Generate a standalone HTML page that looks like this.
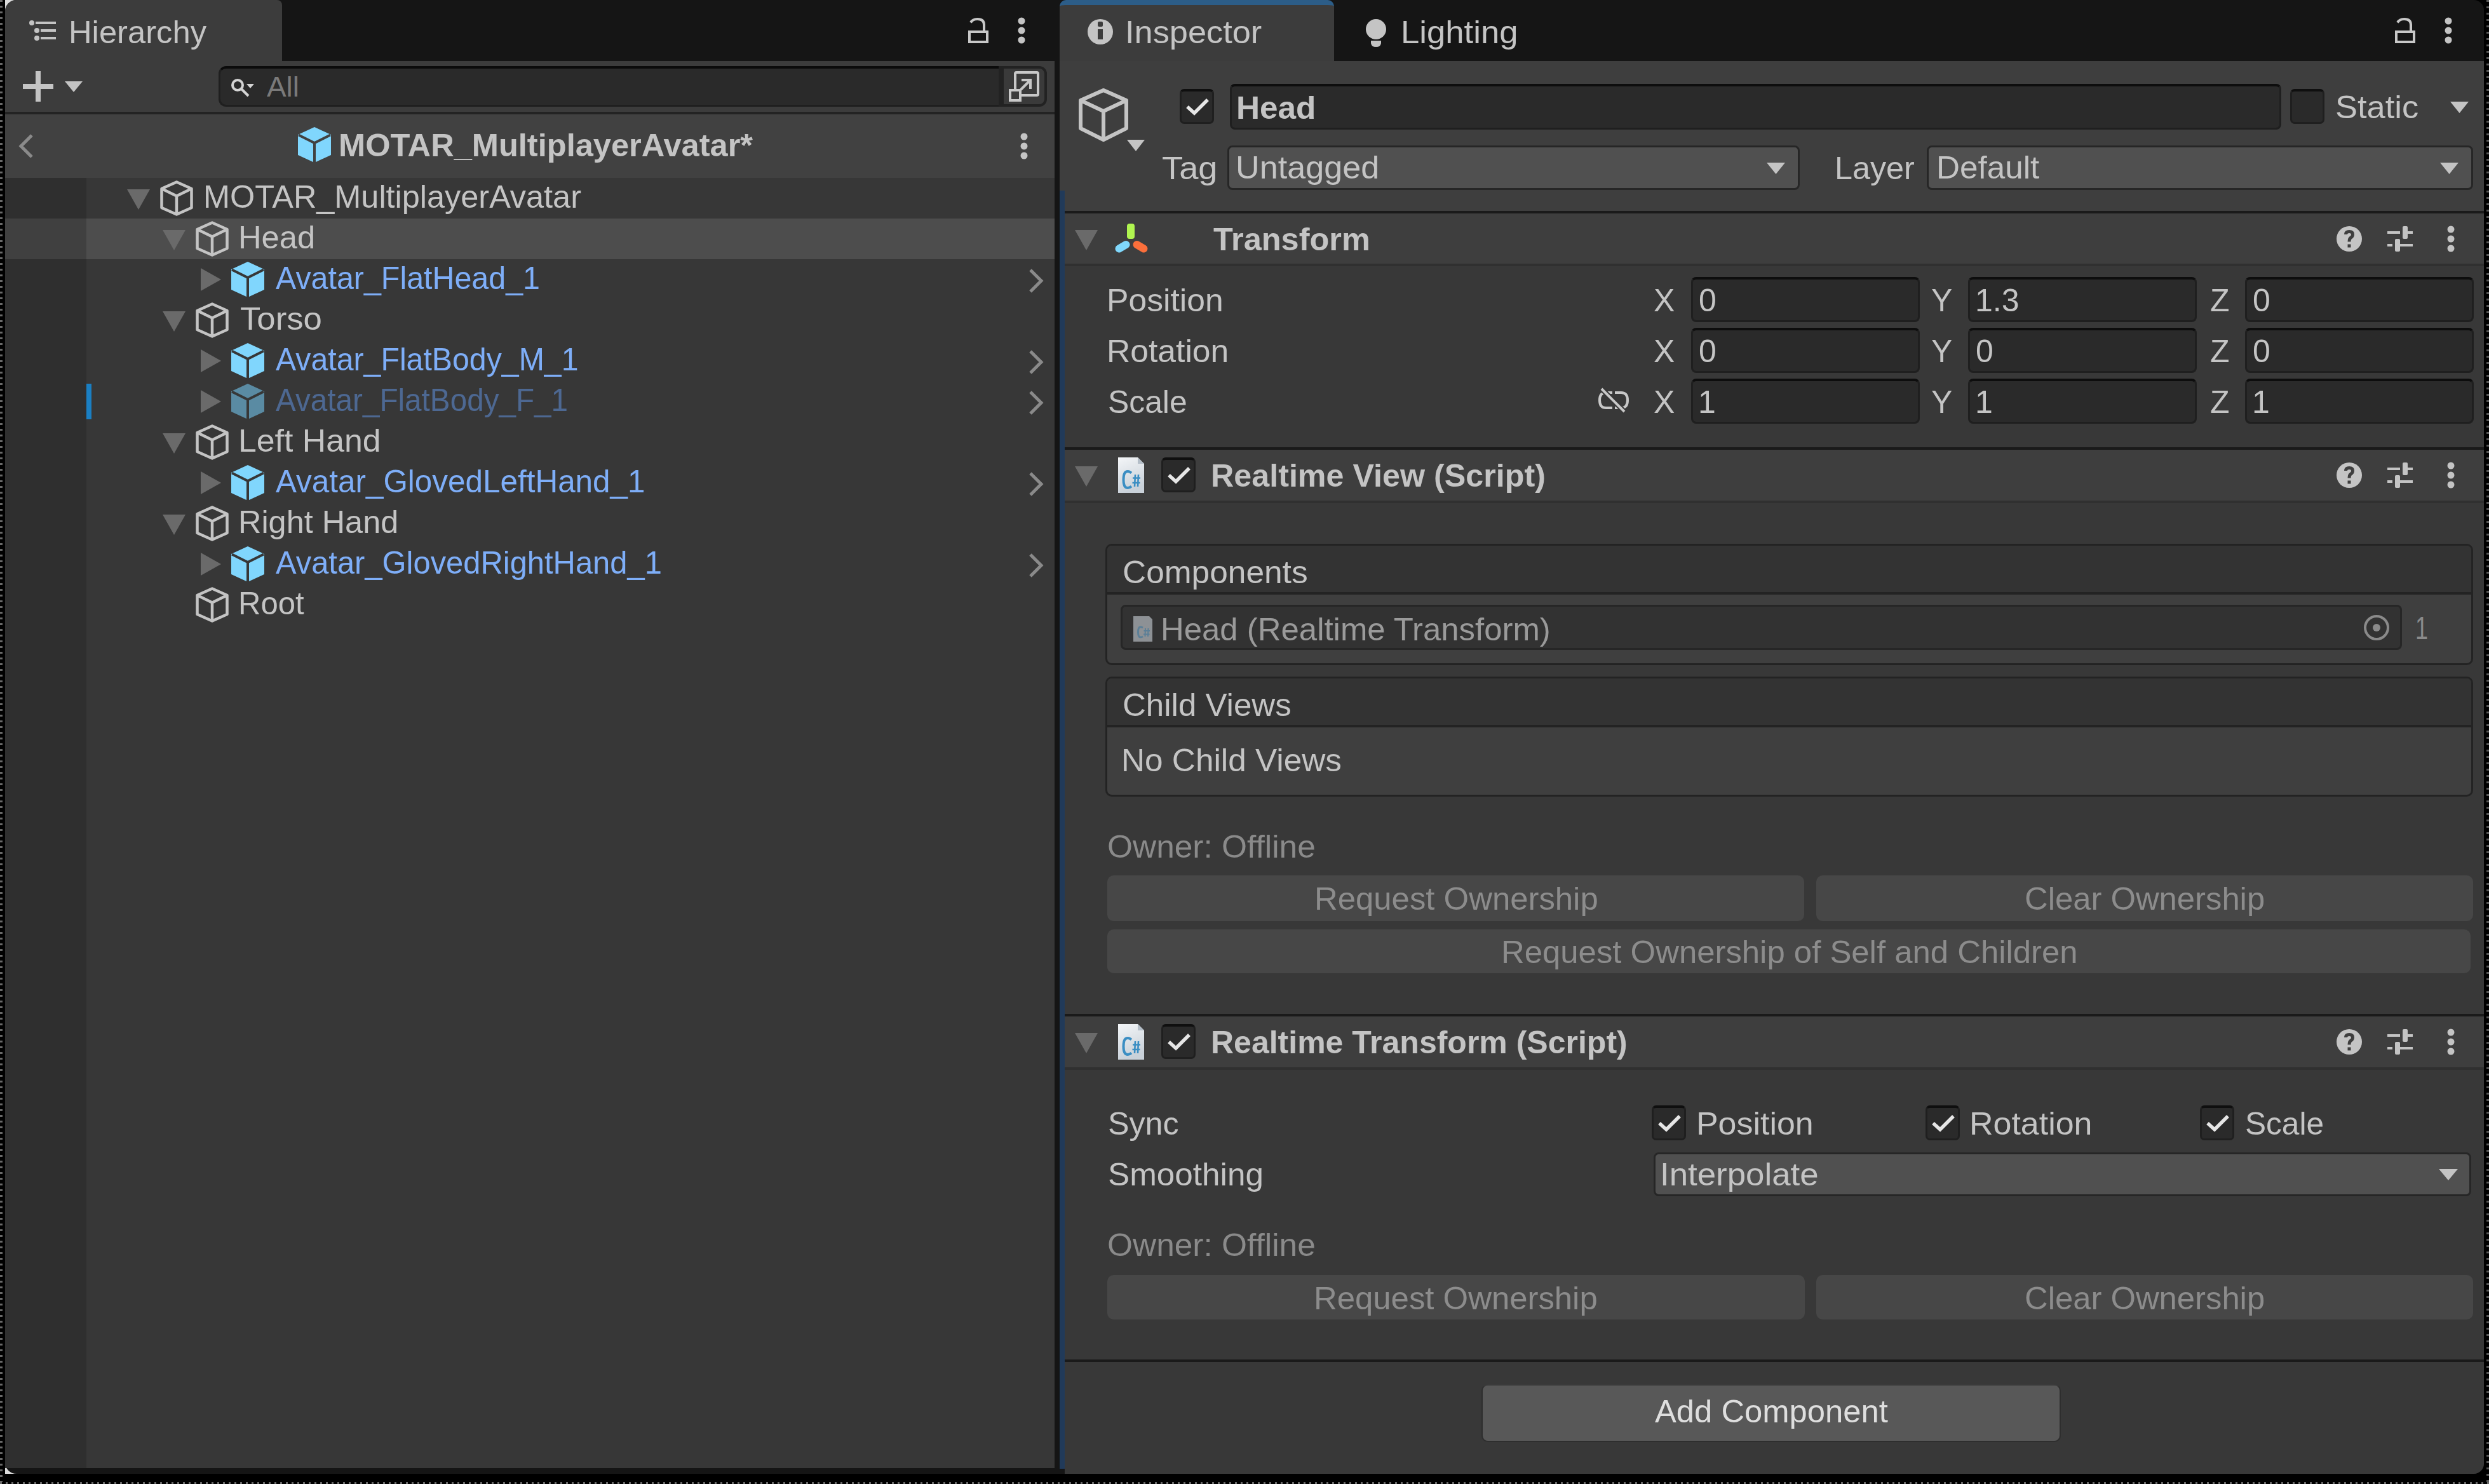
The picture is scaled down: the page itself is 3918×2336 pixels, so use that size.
<!DOCTYPE html>
<html><head><meta charset="utf-8"><title>Unity Editor</title>
<style>
*{margin:0;padding:0;box-sizing:border-box}
html,body{width:3918px;height:2336px;overflow:hidden;background:#000}
body{position:relative;font-family:"Liberation Sans",sans-serif;font-size:50px;color:#c4c4c4}
div,span,svg{position:absolute;display:block}
.t{line-height:50px;white-space:pre;transform-origin:0 0}
.fld{background:#2a2a2a;border:3px solid #1f1f1f;border-top:4px solid #0d0d0d;border-radius:8px}
.dd{background:#505050;border:3px solid #262626;border-radius:8px}
.cb{width:54px;height:55px;background:#2a2a2a;border:3px solid #1f1f1f;border-top:4px solid #0f0f0f;border-radius:7px}
.btnd{background:#474747;border-radius:10px}
.sep{background:#1a1a1a;height:4px}
.hdr{background:#3e3e3e}
.hl{background:#303030;height:4px}
.body{background:#383838}
</style></head><body>
<div style="left:8px;top:0;width:24px;height:24px;background:#dcdcdc"></div>
<div style="left:8px;top:2296px;width:24px;height:24px;background:#dcdcdc"></div>
<div style="left:8px;top:0;width:1652px;height:2320px;background:#151515;border-radius:18px 0 0 18px"></div>
<div style="left:8px;top:0;width:436px;height:96px;background:#3c3c3c;border-radius:18px 8px 0 0"></div>
<div style="left:8px;top:96px;width:1652px;height:80px;background:#3c3c3c"></div>
<div style="left:8px;top:176px;width:1652px;height:4px;background:#232323"></div>
<div style="left:8px;top:180px;width:1652px;height:100px;background:#414141"></div>
<div style="left:8px;top:280px;width:1652px;height:2031px;background:#373737"></div>
<div style="left:8px;top:280px;width:128px;height:2031px;background:#2f2f2f"></div>
<div style="left:8px;top:344px;width:128px;height:64px;background:#404040"></div>
<div style="left:136px;top:344px;width:1524px;height:64px;background:#4d4d4d"></div>
<div style="left:136px;top:604px;width:8px;height:56px;background:#1a7fc3"></div>
<svg style="left:46px;top:32px" width="42" height="32" viewBox="0 0 42 32" fill="#c4c4c4"><circle cx="4" cy="4" r="4"/><rect x="10" y="2" width="32" height="4"/><circle cx="12" cy="16" r="4"/><rect x="18" y="14" width="24" height="4"/><circle cx="12" cy="28" r="4"/><rect x="18" y="26" width="24" height="4"/></svg>
<span class="t" style="left:107.9px;top:26px;transform:scaleX(1.0143);">Hierarchy</span>
<svg style="left:1522px;top:26px" width="36" height="44" viewBox="0 0 36 44" fill="none" stroke="#c8c8c8" stroke-width="4"><rect x="4" y="24" width="28" height="16"/><path d="M6 9.5Q9 4 16.5 4Q27 4 27 13V22"/></svg>
<svg style="left:1601px;top:27px" width="14" height="42" viewBox="0 0 14 42" fill="#c4c4c4"><circle cx="7" cy="6" r="5.5"/><circle cx="7" cy="21" r="5.5"/><circle cx="7" cy="36" r="5.5"/></svg>
<svg style="left:36px;top:112px" width="48" height="48" viewBox="0 0 48 48" fill="#c4c4c4"><rect x="20" y="0" width="8" height="48"/><rect x="0" y="20" width="48" height="8"/></svg>
<svg style="left:102px;top:128px" width="28" height="18" viewBox="0 0 28 18" fill="#c4c4c4"><path d="M0 0H28L14 17Z"/></svg>
<div style="left:344px;top:104px;width:1236px;height:64px;background:#2a2a2a;border:3px solid #1f1f1f;border-top:4px solid #0b0b0b;border-right:0;border-radius:12px 0 0 12px"></div>
<svg style="left:360px;top:120px" width="44" height="36" viewBox="0 0 44 36" fill="none" stroke="#d4d4d4" stroke-width="4"><circle cx="14" cy="14" r="8"/><path d="M20 20L31 31"/><path d="M28 12H40L34 19Z" fill="#d4d4d4" stroke="none"/></svg>
<span class="t" style="left:420.0px;top:115px;font-size:44px;line-height:44px;color:#7a7a7a;transform:scaleX(1.0435);">All</span>
<div style="left:1572px;top:104px;width:76px;height:64px;background:#3a3a3a;border:4px solid #222;border-left:8px solid #222;border-radius:0 12px 12px 0"></div>
<svg style="left:1586px;top:110px" width="52" height="52" viewBox="0 0 52 52" fill="none" stroke="#c8c8c8" stroke-width="4"><path d="M12 30V6Q12 4 14 4H46Q48 4 48 6V38Q48 40 46 40H22"/><rect x="4" y="32" width="16" height="16"/><path d="M21 31L35 17"/><path d="M22 14H38V30H34V18H22Z" fill="#c8c8c8" stroke="none"/></svg>
<svg style="left:27px;top:210px" width="28" height="40" viewBox="0 0 28 40" fill="none" stroke="#8a8a8a" stroke-width="5"><path d="M23 3L6 20L23 37"/></svg>
<svg style="left:469px;top:200px" width="52" height="56" viewBox="0 0 52 56"><path d="M26 0L52 12V44L26 56L0 44V12Z" fill="#80d6fd"/><path d="M1 12.5L26 25L51 12.5M26 25V56" stroke="#414141" stroke-width="4" fill="none"/></svg>
<span class="t" style="left:532.6px;top:204px;font-weight:bold;transform:scaleX(1.0115);">MOTAR_MultiplayerAvatar*</span>
<svg style="left:1605px;top:209px" width="14" height="42" viewBox="0 0 14 42" fill="#c4c4c4"><circle cx="7" cy="6" r="5.5"/><circle cx="7" cy="21" r="5.5"/><circle cx="7" cy="36" r="5.5"/></svg>
<svg style="left:200px;top:298px" width="36" height="32" viewBox="0 0 36 32"><path d="M0 0H36L18 32Z" fill="#6a6a6a"/></svg>
<svg style="left:252px;top:284px" width="52" height="56" viewBox="0 0 52 56"><path d="M26 2.5L49.5 13V43L26 53.5L2.5 43V13Z M2.5 13L26 24.5L49.5 13M26 24.5V53.5" fill="none" stroke="#c4c4c4" stroke-width="4.5" stroke-linejoin="round"/></svg>
<span class="t" style="left:319.5px;top:285px;transform:scaleX(1.0084);">MOTAR_MultiplayerAvatar</span>
<svg style="left:256px;top:362px" width="36" height="32" viewBox="0 0 36 32"><path d="M0 0H36L18 32Z" fill="#6a6a6a"/></svg>
<svg style="left:308px;top:348px" width="52" height="56" viewBox="0 0 52 56"><path d="M26 2.5L49.5 13V43L26 53.5L2.5 43V13Z M2.5 13L26 24.5L49.5 13M26 24.5V53.5" fill="none" stroke="#c4c4c4" stroke-width="4.5" stroke-linejoin="round"/></svg>
<span class="t" style="left:374.9px;top:349px;transform:scaleX(1.0133);">Head</span>
<svg style="left:316px;top:422px" width="32" height="36" viewBox="0 0 32 36"><path d="M0 0V36L32 18Z" fill="#6a6a6a"/></svg>
<svg style="left:364px;top:412px" width="52" height="56" viewBox="0 0 52 56"><path d="M26 0L52 12V44L26 56L0 44V12Z" fill="#80d6fd"/><path d="M1 12.5L26 25L51 12.5M26 25V56" stroke="#373737" stroke-width="4" fill="none"/></svg>
<span class="t" style="left:433.5px;top:413px;color:#7eaef8;transform:scaleX(0.9675);">Avatar_FlatHead_1</span>
<svg style="left:1618px;top:422px" width="26" height="40" viewBox="0 0 26 40" fill="none" stroke="#8a8a8a" stroke-width="5"><path d="M4 3L21 20L4 37"/></svg>
<svg style="left:256px;top:490px" width="36" height="32" viewBox="0 0 36 32"><path d="M0 0H36L18 32Z" fill="#6a6a6a"/></svg>
<svg style="left:308px;top:476px" width="52" height="56" viewBox="0 0 52 56"><path d="M26 2.5L49.5 13V43L26 53.5L2.5 43V13Z M2.5 13L26 24.5L49.5 13M26 24.5V53.5" fill="none" stroke="#c4c4c4" stroke-width="4.5" stroke-linejoin="round"/></svg>
<span class="t" style="left:377.9px;top:477px;transform:scaleX(1.0546);">Torso</span>
<svg style="left:316px;top:550px" width="32" height="36" viewBox="0 0 32 36"><path d="M0 0V36L32 18Z" fill="#6a6a6a"/></svg>
<svg style="left:364px;top:540px" width="52" height="56" viewBox="0 0 52 56"><path d="M26 0L52 12V44L26 56L0 44V12Z" fill="#80d6fd"/><path d="M1 12.5L26 25L51 12.5M26 25V56" stroke="#373737" stroke-width="4" fill="none"/></svg>
<span class="t" style="left:433.5px;top:541px;color:#7eaef8;transform:scaleX(0.9650);">Avatar_FlatBody_M_1</span>
<svg style="left:1618px;top:550px" width="26" height="40" viewBox="0 0 26 40" fill="none" stroke="#8a8a8a" stroke-width="5"><path d="M4 3L21 20L4 37"/></svg>
<svg style="left:316px;top:614px" width="32" height="36" viewBox="0 0 32 36"><path d="M0 0V36L32 18Z" fill="#6a6a6a"/></svg>
<svg style="left:364px;top:604px" width="52" height="56" viewBox="0 0 52 56"><path d="M26 0L52 12V44L26 56L0 44V12Z" fill="#5a8ba3"/><path d="M1 12.5L26 25L51 12.5M26 25V56" stroke="#373737" stroke-width="4" fill="none"/></svg>
<span class="t" style="left:433.5px;top:605px;color:#4d6892;transform:scaleX(0.9532);">Avatar_FlatBody_F_1</span>
<svg style="left:1618px;top:614px" width="26" height="40" viewBox="0 0 26 40" fill="none" stroke="#8a8a8a" stroke-width="5"><path d="M4 3L21 20L4 37"/></svg>
<svg style="left:256px;top:682px" width="36" height="32" viewBox="0 0 36 32"><path d="M0 0H36L18 32Z" fill="#6a6a6a"/></svg>
<svg style="left:308px;top:668px" width="52" height="56" viewBox="0 0 52 56"><path d="M26 2.5L49.5 13V43L26 53.5L2.5 43V13Z M2.5 13L26 24.5L49.5 13M26 24.5V53.5" fill="none" stroke="#c4c4c4" stroke-width="4.5" stroke-linejoin="round"/></svg>
<span class="t" style="left:374.9px;top:669px;transform:scaleX(1.0357);">Left Hand</span>
<svg style="left:316px;top:742px" width="32" height="36" viewBox="0 0 32 36"><path d="M0 0V36L32 18Z" fill="#6a6a6a"/></svg>
<svg style="left:364px;top:732px" width="52" height="56" viewBox="0 0 52 56"><path d="M26 0L52 12V44L26 56L0 44V12Z" fill="#80d6fd"/><path d="M1 12.5L26 25L51 12.5M26 25V56" stroke="#373737" stroke-width="4" fill="none"/></svg>
<span class="t" style="left:433.5px;top:733px;color:#7eaef8;transform:scaleX(0.9884);">Avatar_GlovedLeftHand_1</span>
<svg style="left:1618px;top:742px" width="26" height="40" viewBox="0 0 26 40" fill="none" stroke="#8a8a8a" stroke-width="5"><path d="M4 3L21 20L4 37"/></svg>
<svg style="left:256px;top:810px" width="36" height="32" viewBox="0 0 36 32"><path d="M0 0H36L18 32Z" fill="#6a6a6a"/></svg>
<svg style="left:308px;top:796px" width="52" height="56" viewBox="0 0 52 56"><path d="M26 2.5L49.5 13V43L26 53.5L2.5 43V13Z M2.5 13L26 24.5L49.5 13M26 24.5V53.5" fill="none" stroke="#c4c4c4" stroke-width="4.5" stroke-linejoin="round"/></svg>
<span class="t" style="left:375.0px;top:797px;transform:scaleX(1.0082);">Right Hand</span>
<svg style="left:316px;top:870px" width="32" height="36" viewBox="0 0 32 36"><path d="M0 0V36L32 18Z" fill="#6a6a6a"/></svg>
<svg style="left:364px;top:860px" width="52" height="56" viewBox="0 0 52 56"><path d="M26 0L52 12V44L26 56L0 44V12Z" fill="#80d6fd"/><path d="M1 12.5L26 25L51 12.5M26 25V56" stroke="#373737" stroke-width="4" fill="none"/></svg>
<span class="t" style="left:433.5px;top:861px;color:#7eaef8;transform:scaleX(0.9777);">Avatar_GlovedRightHand_1</span>
<svg style="left:1618px;top:870px" width="26" height="40" viewBox="0 0 26 40" fill="none" stroke="#8a8a8a" stroke-width="5"><path d="M4 3L21 20L4 37"/></svg>
<svg style="left:308px;top:924px" width="52" height="56" viewBox="0 0 52 56"><path d="M26 2.5L49.5 13V43L26 53.5L2.5 43V13Z M2.5 13L26 24.5L49.5 13M26 24.5V53.5" fill="none" stroke="#c4c4c4" stroke-width="4.5" stroke-linejoin="round"/></svg>
<span class="t" style="left:375.1px;top:925px;transform:scaleX(0.9804);">Root</span>
<div style="left:1660px;top:0;width:8px;height:2320px;background:#151515"></div>
<div style="left:1668px;top:0;width:2242px;height:2320px;background:#151515;border-radius:0 16px 16px 0"></div>
<div style="left:1668px;top:0;width:432px;height:96px;background:#3c3c3c;border-radius:10px 10px 0 0;border-top:8px solid #2c5d88"></div>
<svg style="left:1712px;top:30px" width="40" height="40" viewBox="0 0 40 40"><circle cx="20" cy="20" r="20" fill="#c4c4c4"/><rect x="16" y="16" width="8" height="16" fill="#3c3c3c"/><rect x="16" y="4" width="8" height="8" rx="2" fill="#3c3c3c"/></svg>
<span class="t" style="left:1770.5px;top:26px;transform:scaleX(1.0463);">Inspector</span>
<svg style="left:2150px;top:30px" width="32" height="44" viewBox="0 0 32 44" fill="#c4c4c4"><circle cx="16" cy="16" r="16"/><path d="M8 34H24V38Q23 44 16 44Q9 44 8 38Z"/></svg>
<span class="t" style="left:2204.8px;top:26px;transform:scaleX(1.0536);">Lighting</span>
<svg style="left:3768px;top:26px" width="36" height="44" viewBox="0 0 36 44" fill="none" stroke="#c8c8c8" stroke-width="4"><rect x="4" y="24" width="28" height="16"/><path d="M6 9.5Q9 4 16.5 4Q27 4 27 13V22"/></svg>
<svg style="left:3847px;top:27px" width="14" height="42" viewBox="0 0 14 42" fill="#c4c4c4"><circle cx="7" cy="6" r="5.5"/><circle cx="7" cy="21" r="5.5"/><circle cx="7" cy="36" r="5.5"/></svg>
<div class="hdr" style="left:1668px;top:96px;width:2242px;height:236px"></div>
<div style="left:1668px;top:300px;width:8px;height:2012px;background:#213a59"></div>
<svg style="left:1696px;top:138px" width="82" height="86" viewBox="0 0 82 86"><path d="M41 4L77 20V64L41 82L5 64V20Z M5 20L41 37L77 20M41 37V82" fill="none" stroke="#c4c4c4" stroke-width="6" stroke-linejoin="round"/></svg>
<svg style="left:1774px;top:220px" width="28" height="18" viewBox="0 0 28 18"><path d="M0 0H28L14 18Z" fill="#c4c4c4"/></svg>
<div class="cb" style="left:1857px;top:140px"></div><svg style="left:1867px;top:154px" width="36" height="28" viewBox="0 0 36 28" fill="none" stroke="#e6e6e6" stroke-width="5.5"><path d="M2 14L13 24L34 3"/></svg>
<div class="fld" style="left:1936px;top:132px;width:1655px;height:72px"></div>
<span class="t" style="left:1945.9px;top:145px;font-weight:bold;transform:scaleX(1.0259);">Head</span>
<div class="cb" style="left:3605px;top:140px"></div>
<span class="t" style="left:3675.9px;top:144px;transform:scaleX(1.0492);">Static</span>
<svg style="left:3857px;top:160px" width="29" height="18" viewBox="0 0 29 18"><path d="M0 0H29L14.5 18Z" fill="#c4c4c4"/></svg>
<span class="t" style="left:1828.9px;top:240px;transform:scaleX(1.0857);">Tag</span>
<div class="dd" style="left:1932px;top:229px;width:901px;height:70px"></div>
<span class="t" style="left:1944.8px;top:239px;transform:scaleX(1.0429);">Untagged</span>
<svg style="left:2781px;top:256px" width="29" height="18" viewBox="0 0 29 18"><path d="M0 0H29L14.5 18Z" fill="#c4c4c4"/></svg>
<span class="t" style="left:2888.0px;top:240px;transform:scaleX(1.0058);">Layer</span>
<div class="dd" style="left:3033px;top:229px;width:860px;height:70px"></div>
<span class="t" style="left:3047.9px;top:239px;transform:scaleX(1.0247);">Default</span>
<svg style="left:3841px;top:256px" width="29" height="18" viewBox="0 0 29 18"><path d="M0 0H29L14.5 18Z" fill="#c4c4c4"/></svg>
<div class="sep" style="left:1676px;top:332px;width:2234px"></div>
<div class="hdr" style="left:1676px;top:336px;width:2234px;height:79px"></div>
<div class="hl" style="left:1676px;top:415px;width:2234px"></div>
<svg style="left:1692px;top:362px" width="36" height="32" viewBox="0 0 36 32"><path d="M0 0H36L18 32Z" fill="#6a6a6a"/></svg>
<svg style="left:1752px;top:350px" width="58" height="50" viewBox="0 0 58 50"><rect x="22" y="2" width="12" height="24" rx="4" fill="#b0f550"/><path d="M9.5 41.5L20.5 35" stroke="#80d8fc" stroke-width="12" stroke-linecap="round"/><path d="M37.5 35L48.5 41.5" stroke="#fb6f3b" stroke-width="12" stroke-linecap="round"/></svg>
<span class="t" style="left:1909.7px;top:352px;font-weight:bold;transform:scaleX(1.0095);">Transform</span>
<svg style="left:3678px;top:356px" width="40" height="40" viewBox="0 0 40 40"><circle cx="20" cy="20" r="20" fill="#c4c4c4"/><path d="M14.5 13Q14.5 8.5 20 8.5Q25.5 8.5 25.5 13Q25.5 16.5 22.5 18Q20 19.5 20 24.5" fill="none" stroke="#3e3e3e" stroke-width="5"/><rect x="17.5" y="28.5" width="5" height="5" fill="#3e3e3e"/></svg>
<svg style="left:3758px;top:356px" width="40" height="40" viewBox="0 0 40 40" fill="#c4c4c4"><rect x="0" y="8" width="20" height="4"/><rect x="28" y="8" width="12" height="4"/><rect x="24" y="0" width="8" height="20" rx="2"/><rect x="0" y="28" width="8" height="4"/><rect x="16" y="28" width="24" height="4"/><rect x="12" y="20" width="8" height="20" rx="2"/></svg>
<svg style="left:3851px;top:355px" width="14" height="42" viewBox="0 0 14 42" fill="#c4c4c4"><circle cx="7" cy="6" r="5.5"/><circle cx="7" cy="21" r="5.5"/><circle cx="7" cy="36" r="5.5"/></svg>
<div class="body" style="left:1676px;top:419px;width:2234px;height:285px"></div>
<span class="t" style="left:1742.3px;top:448px;transform:scaleX(1.0327);">Position</span>
<span class="t" style="left:2603.0px;top:448px;">X</span>
<div class="fld" style="left:2662px;top:436px;width:360px;height:71px"></div>
<span class="t" style="left:2674.0px;top:448px;">0</span>
<span class="t" style="left:3040.0px;top:448px;">Y</span>
<div class="fld" style="left:3098px;top:436px;width:360px;height:71px"></div>
<span class="t" style="left:3109.0px;top:448px;">1.3</span>
<span class="t" style="left:3479.0px;top:448px;">Z</span>
<div class="fld" style="left:3534px;top:436px;width:360px;height:71px"></div>
<span class="t" style="left:3546.0px;top:448px;">0</span>
<span class="t" style="left:1742.3px;top:528px;transform:scaleX(1.0324);">Rotation</span>
<span class="t" style="left:2603.0px;top:528px;">X</span>
<div class="fld" style="left:2662px;top:516px;width:360px;height:71px"></div>
<span class="t" style="left:2674.0px;top:528px;">0</span>
<span class="t" style="left:3040.0px;top:528px;">Y</span>
<div class="fld" style="left:3098px;top:516px;width:360px;height:71px"></div>
<span class="t" style="left:3110.0px;top:528px;">0</span>
<span class="t" style="left:3479.0px;top:528px;">Z</span>
<div class="fld" style="left:3534px;top:516px;width:360px;height:71px"></div>
<span class="t" style="left:3546.0px;top:528px;">0</span>
<span class="t" style="left:1744.4px;top:608px;transform:scaleX(0.9967);">Scale</span>
<span class="t" style="left:2603.0px;top:608px;">X</span>
<div class="fld" style="left:2662px;top:596px;width:360px;height:71px"></div>
<span class="t" style="left:2673.0px;top:608px;">1</span>
<span class="t" style="left:3040.0px;top:608px;">Y</span>
<div class="fld" style="left:3098px;top:596px;width:360px;height:71px"></div>
<span class="t" style="left:3109.0px;top:608px;">1</span>
<span class="t" style="left:3479.0px;top:608px;">Z</span>
<div class="fld" style="left:3534px;top:596px;width:360px;height:71px"></div>
<span class="t" style="left:3545.0px;top:608px;">1</span>
<svg style="left:2514px;top:608px" width="52" height="44" viewBox="0 0 52 44" fill="none" stroke="#c8c8c8" stroke-width="4"><path d="M24 10H14Q4 10 4 22Q4 34 14 34H24M28 10H38Q48 10 48 22Q48 34 38 34H28"/><path d="M7 4L43 40" stroke="#373737" stroke-width="8"/><path d="M7 4L43 40"/></svg>
<div class="sep" style="left:1676px;top:704px;width:2234px"></div>
<div class="hdr" style="left:1676px;top:708px;width:2234px;height:80px"></div>
<div class="hl" style="left:1676px;top:788px;width:2234px"></div>
<svg style="left:1692px;top:734px" width="36" height="32" viewBox="0 0 36 32"><path d="M0 0H36L18 32Z" fill="#6a6a6a"/></svg>
<svg style="left:1760px;top:720px" width="41" height="57" viewBox="0 0 41 57"><defs><linearGradient id="pg720" x1="0" y1="0" x2="0.3" y2="1"><stop offset="0" stop-color="#f4f6f8"/><stop offset="1" stop-color="#c9d1d9"/></linearGradient></defs><path d="M0 0H31L41 10V56H0Z" fill="url(#pg720)"/><path d="M31 0L41 10H31Z" fill="#b4bec8"/><path d="M21 24.5Q18 22 15 22Q8.5 22 8.5 35Q8.5 48 15 48Q18 48 21 45.5" fill="none" stroke="#3b8ec3" stroke-width="4"/><path d="M27 27L26 46M32 27L31 46M23 32.5H35M22.5 40H34.5" fill="none" stroke="#3b8ec3" stroke-width="2.6"/></svg>
<div class="cb" style="left:1828px;top:720px"></div><svg style="left:1838px;top:734px" width="36" height="28" viewBox="0 0 36 28" fill="none" stroke="#e6e6e6" stroke-width="5.5"><path d="M2 14L13 24L34 3"/></svg>
<span class="t" style="left:1906.0px;top:724px;font-weight:bold;transform:scaleX(1.0050);">Realtime View (Script)</span>
<svg style="left:3678px;top:728px" width="40" height="40" viewBox="0 0 40 40"><circle cx="20" cy="20" r="20" fill="#c4c4c4"/><path d="M14.5 13Q14.5 8.5 20 8.5Q25.5 8.5 25.5 13Q25.5 16.5 22.5 18Q20 19.5 20 24.5" fill="none" stroke="#3e3e3e" stroke-width="5"/><rect x="17.5" y="28.5" width="5" height="5" fill="#3e3e3e"/></svg>
<svg style="left:3758px;top:728px" width="40" height="40" viewBox="0 0 40 40" fill="#c4c4c4"><rect x="0" y="8" width="20" height="4"/><rect x="28" y="8" width="12" height="4"/><rect x="24" y="0" width="8" height="20" rx="2"/><rect x="0" y="28" width="8" height="4"/><rect x="16" y="28" width="24" height="4"/><rect x="12" y="20" width="8" height="20" rx="2"/></svg>
<svg style="left:3851px;top:727px" width="14" height="42" viewBox="0 0 14 42" fill="#c4c4c4"><circle cx="7" cy="6" r="5.5"/><circle cx="7" cy="21" r="5.5"/><circle cx="7" cy="36" r="5.5"/></svg>
<div class="body" style="left:1676px;top:792px;width:2234px;height:804px"></div>
<div style="left:1740px;top:856px;width:2153px;height:191px;background:#3f3f3f;border:3px solid #232323;border-radius:10px;overflow:hidden"><div style="left:0;top:0;width:2147px;height:77px;background:#333;border-bottom:4px solid #232323"></div></div>
<span class="t" style="left:1766.9px;top:876px;transform:scaleX(1.0286);">Components</span>
<div style="left:1764px;top:952px;width:2017px;height:71px;background:#323232;border:3px solid #262626;border-radius:8px"></div>
<svg style="left:1784px;top:970px" width="30" height="40" viewBox="0 0 30 40"><path d="M0 0H25L30 5V40H0Z" fill="#8d9195"/><path d="M15 18Q13 17 11 17Q7.5 17 7.5 25Q7.5 33 11 33Q13 33 15 32" fill="none" stroke="#5b7f97" stroke-width="3"/><path d="M19 19L18.5 32M23.5 19L23 32M16.5 23H26M16 28.5H25.5" fill="none" stroke="#5b7f97" stroke-width="2"/></svg>
<span class="t" style="left:1826.6px;top:966px;color:#9a9a9a;transform:scaleX(1.0180);">Head (Realtime Transform)</span>
<svg style="left:3720px;top:967px" width="42" height="42" viewBox="0 0 42 42"><circle cx="21" cy="21" r="18" fill="none" stroke="#8a8a8a" stroke-width="4"/><circle cx="21" cy="21" r="6" fill="#8a8a8a"/></svg>
<span class="t" style="left:3801.8px;top:964px;color:#8a8a8a;transform:scaleX(0.7217);">1</span>
<div style="left:1740px;top:1065px;width:2153px;height:189px;background:#3f3f3f;border:3px solid #232323;border-radius:10px;overflow:hidden"><div style="left:0;top:0;width:2147px;height:77px;background:#333;border-bottom:4px solid #232323"></div></div>
<span class="t" style="left:1767.3px;top:1085px;transform:scaleX(1.0206);">Child Views</span>
<span class="t" style="left:1765.2px;top:1172px;transform:scaleX(1.0262);">No Child Views</span>
<span class="t" style="left:1742.9px;top:1308px;color:#8a8a8a;transform:scaleX(1.0286);">Owner: Offline</span>
<div class="btnd" style="left:1743px;top:1378px;width:1097px;height:72px"></div>
<span class="t" style="left:2068.9px;top:1390px;color:#8c8c8c;transform:scaleX(1.0173);">Request Ownership</span>
<div class="btnd" style="left:2859px;top:1378px;width:1034px;height:72px"></div>
<span class="t" style="left:3187.0px;top:1390px;color:#8c8c8c;transform:scaleX(1.0155);">Clear Ownership</span>
<div class="btnd" style="left:1743px;top:1463px;width:2146px;height:69px"></div>
<span class="t" style="left:2362.6px;top:1473.5px;color:#8c8c8c;transform:scaleX(1.0173);">Request Ownership of Self and Children</span>
<div class="sep" style="left:1676px;top:1596px;width:2234px"></div>
<div class="hdr" style="left:1676px;top:1600px;width:2234px;height:80px"></div>
<div class="hl" style="left:1676px;top:1680px;width:2234px"></div>
<svg style="left:1692px;top:1626px" width="36" height="32" viewBox="0 0 36 32"><path d="M0 0H36L18 32Z" fill="#6a6a6a"/></svg>
<svg style="left:1760px;top:1612px" width="41" height="57" viewBox="0 0 41 57"><defs><linearGradient id="pg1612" x1="0" y1="0" x2="0.3" y2="1"><stop offset="0" stop-color="#f4f6f8"/><stop offset="1" stop-color="#c9d1d9"/></linearGradient></defs><path d="M0 0H31L41 10V56H0Z" fill="url(#pg1612)"/><path d="M31 0L41 10H31Z" fill="#b4bec8"/><path d="M21 24.5Q18 22 15 22Q8.5 22 8.5 35Q8.5 48 15 48Q18 48 21 45.5" fill="none" stroke="#3b8ec3" stroke-width="4"/><path d="M27 27L26 46M32 27L31 46M23 32.5H35M22.5 40H34.5" fill="none" stroke="#3b8ec3" stroke-width="2.6"/></svg>
<div class="cb" style="left:1828px;top:1612px"></div><svg style="left:1838px;top:1626px" width="36" height="28" viewBox="0 0 36 28" fill="none" stroke="#e6e6e6" stroke-width="5.5"><path d="M2 14L13 24L34 3"/></svg>
<span class="t" style="left:1906.0px;top:1616px;font-weight:bold;">Realtime Transform (Script)</span>
<svg style="left:3678px;top:1620px" width="40" height="40" viewBox="0 0 40 40"><circle cx="20" cy="20" r="20" fill="#c4c4c4"/><path d="M14.5 13Q14.5 8.5 20 8.5Q25.5 8.5 25.5 13Q25.5 16.5 22.5 18Q20 19.5 20 24.5" fill="none" stroke="#3e3e3e" stroke-width="5"/><rect x="17.5" y="28.5" width="5" height="5" fill="#3e3e3e"/></svg>
<svg style="left:3758px;top:1620px" width="40" height="40" viewBox="0 0 40 40" fill="#c4c4c4"><rect x="0" y="8" width="20" height="4"/><rect x="28" y="8" width="12" height="4"/><rect x="24" y="0" width="8" height="20" rx="2"/><rect x="0" y="28" width="8" height="4"/><rect x="16" y="28" width="24" height="4"/><rect x="12" y="20" width="8" height="20" rx="2"/></svg>
<svg style="left:3851px;top:1619px" width="14" height="42" viewBox="0 0 14 42" fill="#c4c4c4"><circle cx="7" cy="6" r="5.5"/><circle cx="7" cy="21" r="5.5"/><circle cx="7" cy="36" r="5.5"/></svg>
<div class="body" style="left:1676px;top:1684px;width:2234px;height:456px"></div>
<span class="t" style="left:1744.4px;top:1744px;transform:scaleX(1.0046);">Sync</span>
<div class="cb" style="left:2600px;top:1740px"></div><svg style="left:2610px;top:1754px" width="36" height="28" viewBox="0 0 36 28" fill="none" stroke="#e6e6e6" stroke-width="5.5"><path d="M2 14L13 24L34 3"/></svg>
<span class="t" style="left:2669.8px;top:1744px;transform:scaleX(1.0380);">Position</span>
<div class="cb" style="left:3031px;top:1740px"></div><svg style="left:3041px;top:1754px" width="36" height="28" viewBox="0 0 36 28" fill="none" stroke="#e6e6e6" stroke-width="5.5"><path d="M2 14L13 24L34 3"/></svg>
<span class="t" style="left:3099.8px;top:1744px;transform:scaleX(1.0391);">Rotation</span>
<div class="cb" style="left:3463px;top:1740px"></div><svg style="left:3473px;top:1754px" width="36" height="28" viewBox="0 0 36 28" fill="none" stroke="#e6e6e6" stroke-width="5.5"><path d="M2 14L13 24L34 3"/></svg>
<span class="t" style="left:3534.0px;top:1744px;transform:scaleX(0.9917);">Scale</span>
<span class="t" style="left:1744.4px;top:1824px;transform:scaleX(1.0248);">Smoothing</span>
<div class="dd" style="left:2603px;top:1814px;width:1287px;height:69px"></div>
<span class="t" style="left:2613.4px;top:1824px;transform:scaleX(1.0565);">Interpolate</span>
<svg style="left:3839px;top:1840px" width="30" height="18" viewBox="0 0 30 18"><path d="M0 0H30L15 18Z" fill="#c4c4c4"/></svg>
<span class="t" style="left:1742.9px;top:1935px;color:#8a8a8a;transform:scaleX(1.0286);">Owner: Offline</span>
<div class="btnd" style="left:1743px;top:2007px;width:1098px;height:70px"></div>
<span class="t" style="left:2067.9px;top:2019px;color:#8c8c8c;transform:scaleX(1.0173);">Request Ownership</span>
<div class="btnd" style="left:2859px;top:2007px;width:1034px;height:70px"></div>
<span class="t" style="left:3187.0px;top:2019px;color:#8c8c8c;transform:scaleX(1.0155);">Clear Ownership</span>
<div class="sep" style="left:1676px;top:2140px;width:2234px"></div>
<div class="body" style="left:1676px;top:2144px;width:2234px;height:176px;border-radius:0 0 16px 0"></div>
<div style="left:2332px;top:2179px;width:912px;height:91px;background:#585858;border:2px solid #2e2e2e;border-top-color:#3a3a3a;border-radius:10px"></div>
<span class="t" style="left:2604.5px;top:2197px;color:#dedede;transform:scaleX(1.0152);">Add Component</span>
<div style="left:0;top:0;width:4px;height:2336px;background:repeating-linear-gradient(180deg,#6a6a6a 0 3px,#000 3px 9px)"></div>
<div style="left:3914px;top:0;width:4px;height:2336px;background:repeating-linear-gradient(180deg,#5a5a5a 0 3px,#000 3px 10px)"></div>
<div style="left:0;top:2333px;width:3918px;height:3px;background:repeating-linear-gradient(90deg,#6a6a6a 0 3px,#000 3px 9px)"></div>
</body></html>
